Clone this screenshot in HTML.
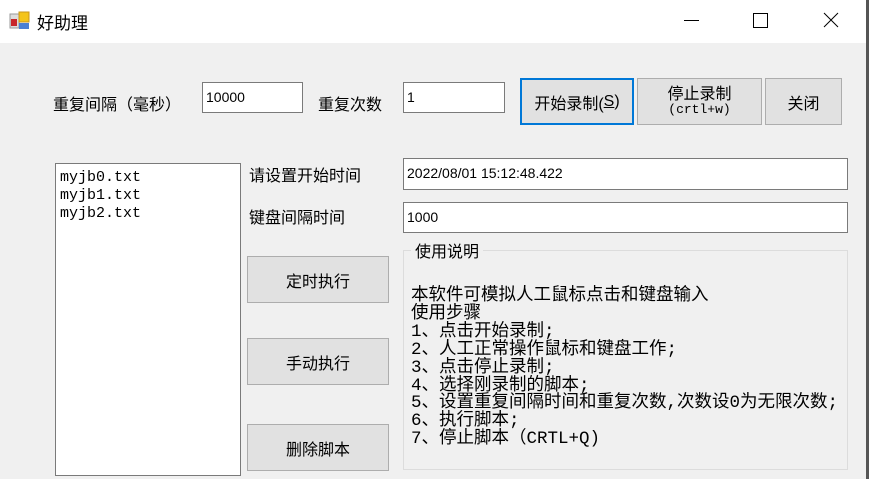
<!DOCTYPE html>
<html><head><meta charset="utf-8"><style>
*{margin:0;padding:0;box-sizing:border-box}
body{width:869px;height:479px;background:#f0f0f0;font-family:"Liberation Sans","Noto Sans CJK SC",sans-serif;position:relative;overflow:hidden;color:#000}
.a{position:absolute}
.title{left:0;top:0;width:866px;height:43px;background:#fff}
.lbl{font-size:16px;white-space:nowrap}
.in{background:#fff;border:1px solid #7a7a7a;font-size:14px;padding:4px 3px;line-height:20px}
.btn{background:#e1e1e1;border:1px solid #adadad;font-size:16px;display:flex;align-items:center;justify-content:center;text-align:center}
.mono{font-family:"Liberation Mono","Noto Sans CJK SC",monospace}
</style></head><body>
<div class="a title"></div>
<svg class="a" style="left:9px;top:10px" width="22" height="22" viewBox="0 0 22 22">
<rect x="1" y="4" width="9" height="14" fill="#ddd" stroke="#999"/>
<rect x="2" y="9" width="6" height="7" fill="#c8262b"/>
<rect x="10" y="2" width="10" height="10" fill="#f4c41a" stroke="#c9961a"/>
<rect x="10" y="13" width="10" height="6" fill="#4a7fd4"/>
</svg>
<div class="a lbl" style="left:37px;top:9px;font-size:17px">好助理</div>
<div class="a" style="left:684px;top:20px;width:15px;height:1px;background:#000"></div>
<div class="a" style="left:753px;top:13px;width:15px;height:15px;border:1px solid #000"></div>
<svg class="a" style="left:823px;top:12px" width="16" height="16"><path d="M1 1L15 15M15 1L1 15" stroke="#000" stroke-width="1"/></svg>
<div class="a" style="left:866px;top:0;width:3px;height:479px;background:#555"></div>

<div class="a lbl" style="left:53px;top:91px">重复间隔（毫秒）</div>
<div class="a in" style="left:202px;top:82px;width:101px;height:31px">10000</div>
<div class="a lbl" style="left:318px;top:91px">重复次数</div>
<div class="a in" style="left:403px;top:82px;width:102px;height:31px">1</div>
<div class="a btn" style="left:520px;top:78px;width:114px;height:47px;border:2px solid #0078d7">开始录制(<u>S</u>)</div>
<div class="a btn" style="left:637px;top:78px;width:125px;height:47px;line-height:15px;flex-direction:column">停止录制<span class="mono" style="font-size:13px">(crtl+w)</span></div>
<div class="a btn" style="left:765px;top:78px;width:77px;height:47px">关闭</div>

<div class="a in mono" style="left:55px;top:163px;width:186px;height:313px;font-size:15px;line-height:18px;padding:5px 4px">myjb0.txt<br>myjb1.txt<br>myjb2.txt</div>
<div class="a lbl" style="left:249px;top:162px">请设置开始时间</div>
<div class="a in" style="left:403px;top:158px;width:445px;height:32px">2022/08/01 15:12:48.422</div>
<div class="a lbl" style="left:249px;top:204px">键盘间隔时间</div>
<div class="a in" style="left:403px;top:202px;width:445px;height:31px">1000</div>

<div class="a btn" style="left:247px;top:256px;width:142px;height:47px">定时执行</div>
<div class="a btn" style="left:247px;top:338px;width:142px;height:47px">手动执行</div>
<div class="a btn" style="left:247px;top:424px;width:142px;height:47px">删除脚本</div>

<div class="a" style="left:403px;top:250px;width:445px;height:220px;border:1px solid #dcdcdc"></div>
<div class="a lbl" style="left:411px;top:238px;background:#f0f0f0;padding:0 4px">使用说明</div>
<div class="a mono" style="left:411px;top:288px;font-size:17.5px;line-height:17.9px;white-space:pre">本软件可模拟人工鼠标点击和键盘输入
使用步骤
1、点击开始录制;
2、人工正常操作鼠标和键盘工作;
3、点击停止录制;
4、选择刚录制的脚本;
5、设置重复间隔时间和重复次数,次数设0为无限次数;
6、执行脚本;
7、停止脚本（CRTL+Q)</div>
</body></html>
